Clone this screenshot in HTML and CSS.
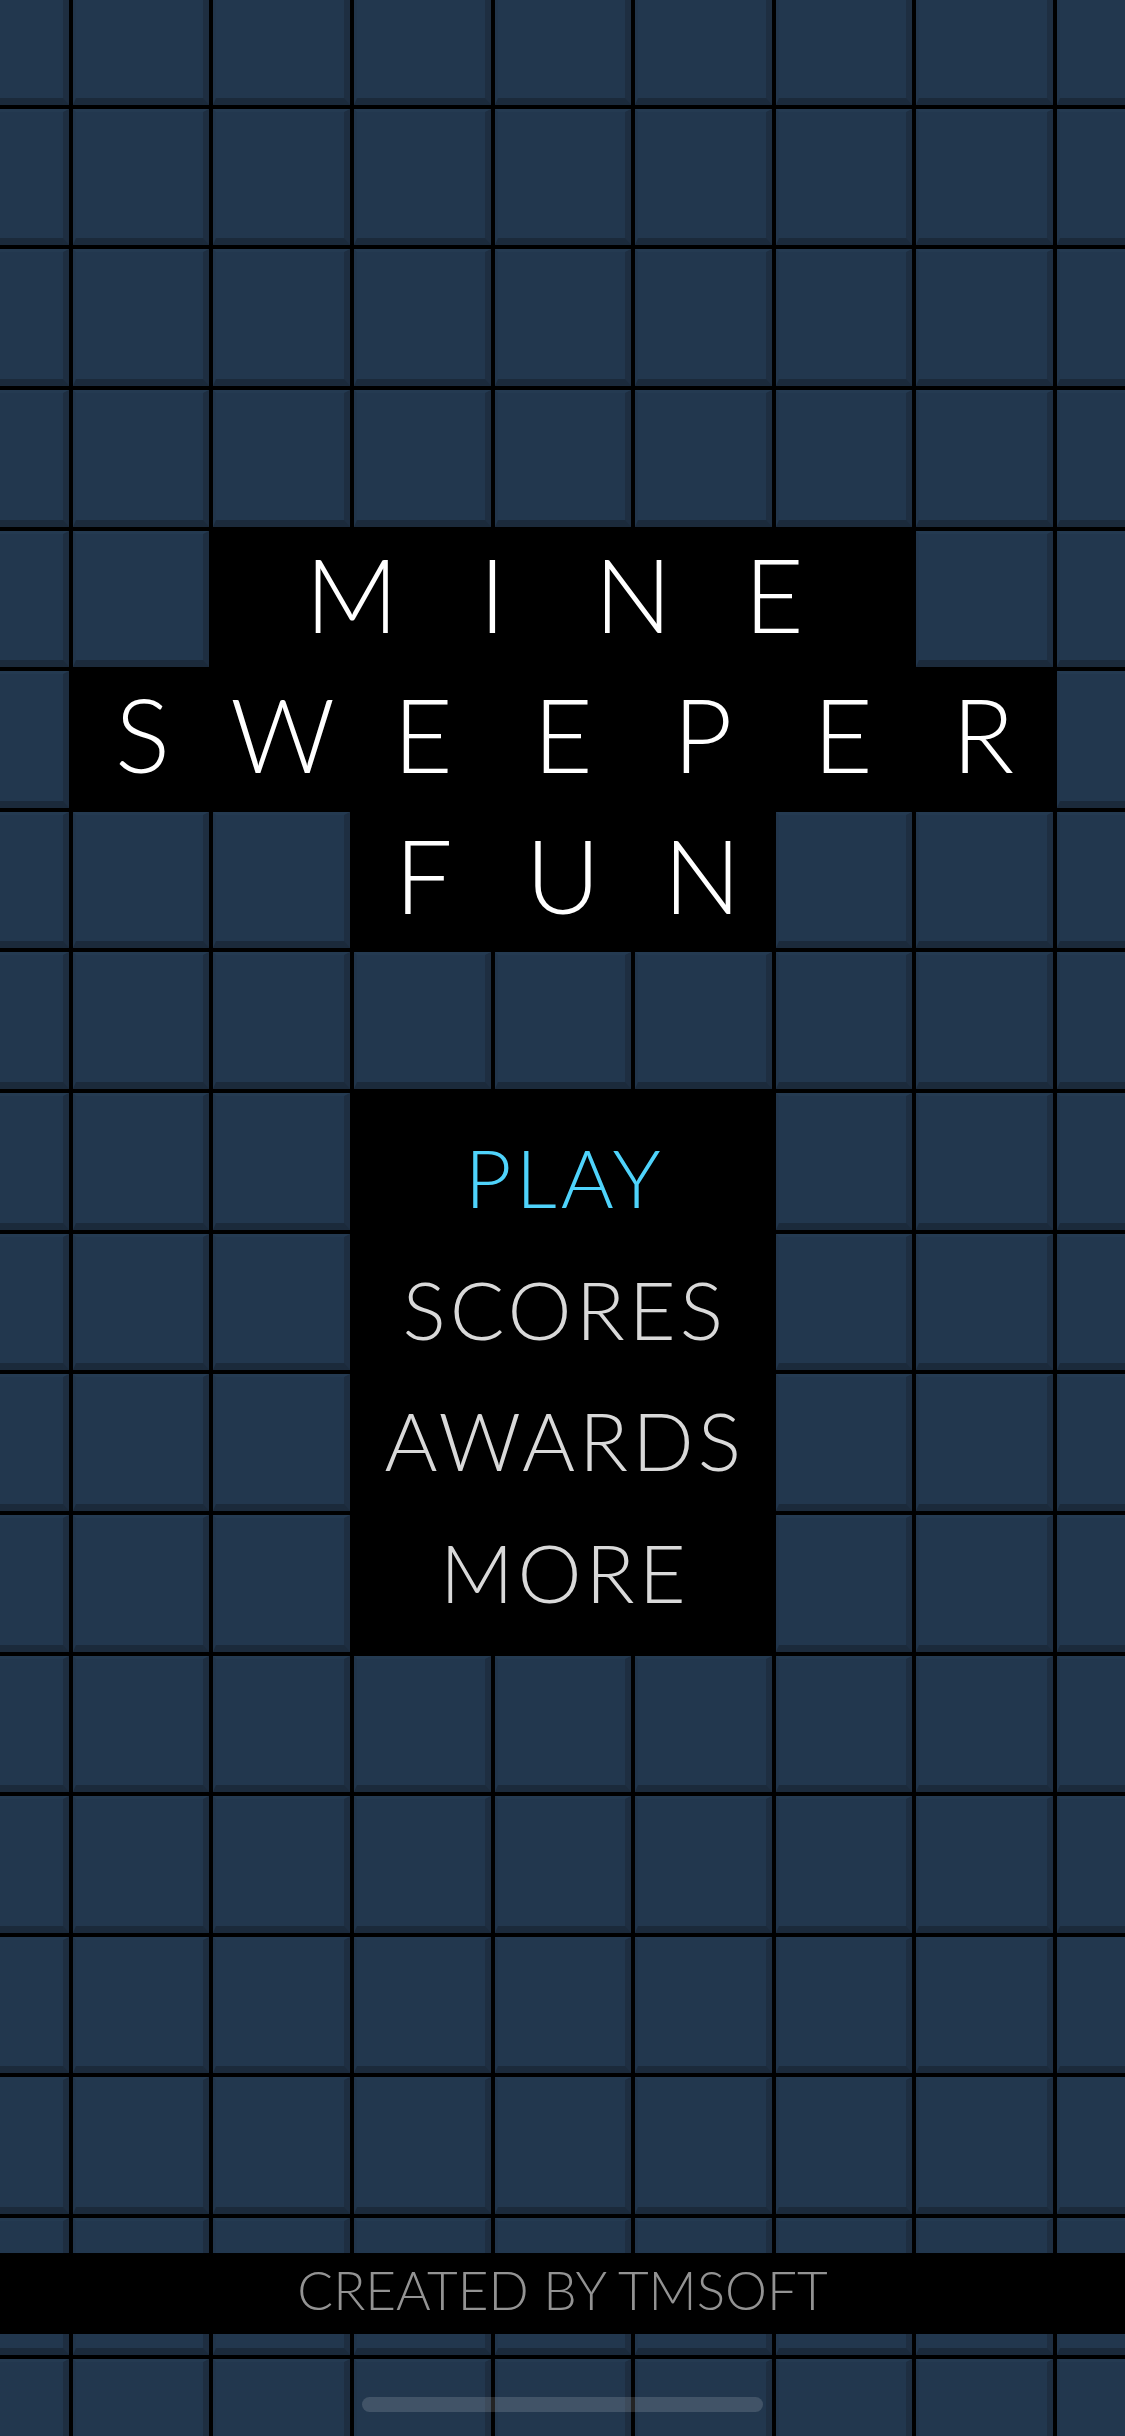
FILE: index.html
```html
<!DOCTYPE html>
<html lang="en">
<head>
  <meta charset="UTF-8" />
  <meta name="viewport" content="width=device-width, initial-scale=1.0"/>
  <title>Mine Sweeper Fun</title>
  <link rel="stylesheet" href="styles.css">
</head>
<body>
  <div class="tabuleiro" id="tabuleiro">
    <div class="bloco titulo-mine">
      <span>M</span><span>I</span><span>N</span><span>E</span>
    </div>
    <div class="bloco titulo-sweeper">
      <span>S</span><span>W</span><span>E</span><span>E</span><span>P</span><span>E</span><span>R</span>
    </div>
    <div class="bloco titulo-fun">
      <span>F</span><span>U</span><span>N</span>
    </div>
    <div class="bloco menu">
      <a class="menu-item ativo">PLAY</a>
      <a class="menu-item">SCORES</a>
      <a class="menu-item">AWARDS</a>
      <a class="menu-item">MORE</a>
    </div>
  </div>

  <div class="rodape">CREATED BY TMSOFT</div>
  <div class="home-indicator"></div>

  <script>
    // 18 linhas x 9 colunas, menos as 27 casas ocupadas pelos blocos pretos
    function gerarTabuleiro() {
      const tabuleiro = document.getElementById("tabuleiro");
      for (let i = 0; i < 135; i++) {
        const tile = document.createElement("div");
        tile.className = "tile";
        tabuleiro.appendChild(tile);
      }
    }

    gerarTabuleiro();
  </script>
</body>
</html>
```

FILE: styles.css
```css
* { box-sizing: border-box; }
body {
  margin: 0;
  width: 1125px;
  height: 2436px;
  overflow: hidden;
  position: relative;
  background-color: #000;
  font-family: Lato, "Open Sans", sans-serif;
}
.tabuleiro {
  display: grid;
  grid-template-columns: repeat(9, 136.625px);
  grid-auto-rows: 136.625px;
  gap: 4px;
  margin: -32px 0 0 -68px;
  width: 1262px;
}
.tile {
  background-color: #22374e;
  border-top: 3px solid #243a51;
  border-left: 3px solid #21354b;
  border-right: 6px solid #1e2e41;
  border-bottom: 7px solid #1b2a3b;
}
.bloco {
  background-color: #000;
  z-index: 1;
}
.titulo-mine,
.titulo-sweeper,
.titulo-fun {
  display: flex;
  justify-content: center;
  align-items: center;
  padding-bottom: 11px;
  color: #fff;
  font-size: 103px;
  font-weight: 300;
  line-height: 1;
}
.titulo-mine span,
.titulo-sweeper span,
.titulo-fun span {
  width: 140.625px;
  text-align: center;
}
.titulo-mine { grid-row: 5; grid-column: 3 / span 5; }
.titulo-sweeper { grid-row: 6; grid-column: 2 / span 7; }
.titulo-fun { grid-row: 7; grid-column: 4 / span 3; }
.menu {
  grid-row: 9 / span 4;
  grid-column: 4 / span 3;
  display: flex;
  flex-direction: column;
  align-items: center;
  padding-top: 18px;
}
.menu-item {
  font-size: 81px;
  font-weight: 300;
  line-height: 131.7px;
  color: #d9d9d9;
  letter-spacing: 4px;
  margin-right: -4px;
  cursor: pointer;
}
.menu-item.ativo {
  color: #4fd3fb;
}
.rodape {
  position: absolute;
  top: 2253px;
  left: 0;
  right: 0;
  height: 81px;
  background-color: #000;
  color: #939393;
  font-size: 53px;
  font-weight: 300;
  line-height: 1;
  display: flex;
  justify-content: center;
  align-items: center;
  padding-bottom: 9px;
  z-index: 2;
}
.home-indicator {
  position: absolute;
  left: 362px;
  bottom: 24px;
  width: 401px;
  height: 15px;
  border-radius: 8px;
  background-color: rgba(255, 255, 255, 0.14);
  z-index: 2;
}
```
